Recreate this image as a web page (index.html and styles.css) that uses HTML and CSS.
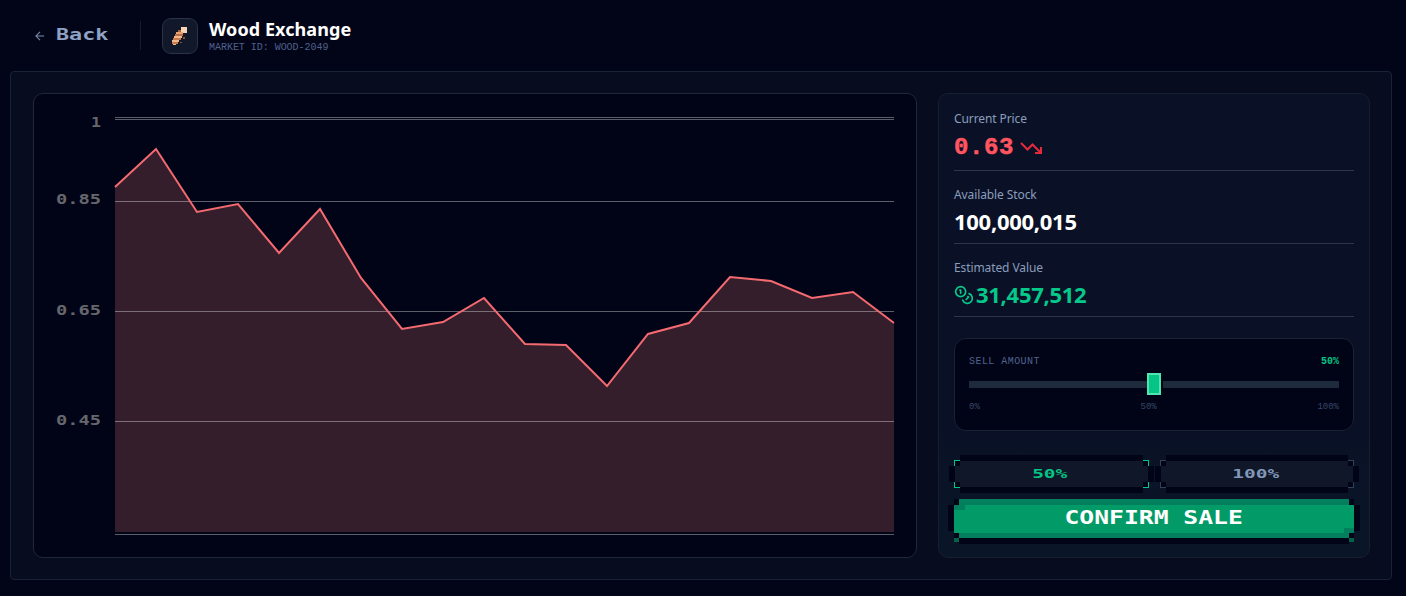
FILE: index.html
```html
<!DOCTYPE html>
<html lang="en">
<head>
<meta charset="utf-8">
<title>Wood Exchange</title>
<link rel="stylesheet" href="styles.css">
</head>
<body>
<header class="topbar">
  <a class="back">
    <svg class="back-icon" viewBox="0 0 24 24"><path d="M12 19l-7-7 7-7M19 12H5"/></svg>
    <span class="back-text pixel">Back</span>
  </a>
  <div class="vsep"></div>
  <div class="wood-tile">
    <svg viewBox="0 0 24 24" shape-rendering="crispEdges" class="wood-icon">
      <rect x="13" y="3" width="6" height="6" fill="#f4d2b4"/>
      <rect x="10" y="6" width="3" height="2" fill="#a8623c"/>
      <rect x="8" y="8" width="7" height="2" fill="#e8a074"/>
      <rect x="7" y="10" width="8" height="2" fill="#b86f45"/>
      <rect x="6" y="12" width="8" height="2" fill="#f2b68b"/>
      <rect x="5" y="14" width="8" height="2" fill="#c47a4e"/>
      <rect x="4" y="16" width="7" height="2" fill="#f2b68b"/>
      <rect x="4" y="18" width="6" height="2" fill="#c47a4e"/>
      <rect x="5" y="20" width="3" height="1" fill="#f2b68b"/>
      <rect x="15" y="13" width="2" height="2" fill="#8a5637"/>
      <rect x="12" y="18" width="2" height="1" fill="#8a5637"/>
    </svg>
  </div>
  <div class="title-block">
    <h1 class="title">Wood Exchange</h1>
    <div class="market-id">MARKET ID: WOOD-2049</div>
  </div>
</header>

<main class="panel">
  <section class="chart-card">
    <svg class="chart" viewBox="0 0 882 464">
      <polygon class="area" points="81,93 122,55 163,118 204,110 245,159 286,115 327,184 368,235 409,228 450,204 491,250 532,251 573,292 614,240 655,229 696,183 737,187 778,204 819,198 860,229 860,438 81,438"/>
      <g class="grid">
        <line x1="81" x2="860" y1="23.5" y2="23.5"/>
        <line x1="81" x2="860" y1="25.5" y2="25.5"/>
        <line x1="81" x2="860" y1="107.5" y2="107.5"/>
        <line x1="81" x2="860" y1="217.5" y2="217.5"/>
        <line x1="81" x2="860" y1="327.5" y2="327.5"/>
        <line x1="81" x2="860" y1="440.5" y2="440.5"/>
      </g>
      <polyline class="stroke" points="81,93 122,55 163,118 204,110 245,159 286,115 327,184 368,235 409,228 450,204 491,250 532,251 573,292 614,240 655,229 696,183 737,187 778,204 819,198 860,229"/>
      <g class="axis">
        <text x="67" y="33" textLength="10" lengthAdjust="spacingAndGlyphs">1</text>
        <text x="67" y="110" textLength="45" lengthAdjust="spacingAndGlyphs">0.85</text>
        <text x="67" y="221" textLength="45" lengthAdjust="spacingAndGlyphs">0.65</text>
        <text x="67" y="331" textLength="45" lengthAdjust="spacingAndGlyphs">0.45</text>
      </g>
    </svg>
  </section>

  <aside class="side-card">
    <div class="stat stat-price">
      <div class="stat-label">Current Price</div>
      <div class="stat-value price">0.63
        <svg class="trend" viewBox="0 0 24 24"><path d="M22 17l-8.5-8.5-5 5L2 7M16 17h6v-6"/></svg>
      </div>
    </div>
    <div class="stat">
      <div class="stat-label">Available Stock</div>
      <div class="stat-value stock">100,000,015</div>
    </div>
    <div class="stat">
      <div class="stat-label">Estimated Value</div>
      <div class="stat-value estimate">
        <svg class="coins" viewBox="0 0 24 24"><circle cx="8" cy="8" r="6"/><path d="M18.09 10.37A6 6 0 1 1 10.34 18M7 6h1v4M16.71 13.88l.7.71-2.82 2.82"/></svg>
        31,457,512
      </div>
    </div>

    <div class="slider-box">
      <div class="slider-head">
        <span class="slider-label">SELL AMOUNT</span>
        <span class="slider-pct">50%</span>
      </div>
      <div class="track"><span class="thumb"></span></div>
      <div class="ticks"><span>0%</span><span>50%</span><span>100%</span></div>
    </div>

    <div class="quick-row">
      <button class="quick quick-on"><span class="pixel">50%</span></button>
      <button class="quick quick-off"><span class="pixel">100%</span></button>
    </div>
    <button class="confirm"><span class="pixel">CONFIRM SALE</span></button>
  </aside>
</main>
</body>
</html>
```
FILE: styles.css
```css
* { box-sizing: border-box; margin: 0; padding: 0; }
html, body { height: 100%; }
body {
  background: #020518;
  font-family: "Noto Sans", sans-serif;
  color: #fff;
  overflow: hidden;
  padding: 0 14px 16px 10px;
  display: flex;
  flex-direction: column;
}
.pixel { font-family: "DejaVu Sans Mono", monospace; font-weight: 700; display: inline-block; }

.topbar {
  height: 71px;
  display: flex;
  align-items: center;
  padding-left: 23px;
  flex: none;
}
.back { display: flex; align-items: center; width: 107px; }
.back-icon { width: 14px; height: 14px; fill: none; stroke: #7c8fb0; stroke-width: 1.8; }
.back-text {
  margin: -2px 0 0 9px;
  font-size: 15px;
  line-height: 18px;
  color: #8ea2c6;
  transform: scaleX(1.45);
  transform-origin: left center;
}
.vsep { width: 1px; height: 29px; background: #151c30; margin-right: 21px; }
.wood-tile {
  width: 36px; height: 36px;
  background: #101829;
  border: 1px solid #2a3448;
  border-radius: 9px;
  display: flex; align-items: center; justify-content: center;
}
.wood-icon { width: 24px; height: 24px; }
.title-block { margin-left: 11px; margin-top: -1px; }
.title { font-size: 18px; line-height: 23px; font-weight: 700; color: #fff; letter-spacing: .07px; }
.market-id { font-family: "Liberation Mono", monospace; font-size: 10px; line-height: 11px; margin-top: 1px; color: #50608c; letter-spacing: -.03px; }

.panel {
  flex: 1;
  min-height: 0;
  display: flex;
  gap: 21px;
  padding: 21px 21px 21px 22px;
  background: #070c1e;
  border: 1px solid #1a2236;
  border-radius: 4px;
}
.chart-card {
  width: 884px;
  flex: none;
  background: #010416;
  border: 1px solid #1f2839;
  border-radius: 10px;
  overflow: hidden;
}
.chart { display: block; width: 882px; height: 464px; }
.area { fill: #351e2b; }
.grid line { stroke: #fff; stroke-opacity: .36; stroke-width: 1; }
.stroke { fill: none; stroke: #f56a70; stroke-width: 2; stroke-linejoin: miter; }
.axis text {
  font-family: "DejaVu Sans Mono", monospace;
  font-weight: 700;
  font-size: 14px;
  fill: #66676c;
  text-anchor: end;
}

.side-card {
  flex: 1;
  min-width: 0;
  display: flex;
  flex-direction: column;
  padding: 15px 15px 0;
  background: linear-gradient(#0a1126 72%, #0a1628);
  border: 1px solid #161e30;
  border-radius: 10px;
}
.stat { border-bottom: 1px solid #2b3648; height: 73px; }
.stat-price { height: 62px; }
.stat-label { font-size: 12px; line-height: 20px; color: #8b9dbb; letter-spacing: -.1px; }
.stat-value { font-size: 22px; line-height: 30px; font-weight: 700; display: flex; align-items: center; margin-top: 1px; letter-spacing: -.28px; }
.stat + .stat { padding-top: 14px; }
.price {
  margin-top: 4px;
  font-family: "Liberation Mono", monospace;
  font-size: 24px;
  color: #ff5560;
  letter-spacing: .6px;
  -webkit-text-stroke: .5px #ff5560;
  gap: 5px;
}
.trend { width: 24px; height: 24px; fill: none; stroke: #e62a3e; stroke-width: 2; }
.stock { color: #fff; }
.estimate { color: #04c98a; gap: 2px; }
.coins { width: 20px; height: 20px; margin-top: 2px; fill: none; stroke: #04c98a; stroke-width: 2; stroke-linecap: round; stroke-linejoin: round; }

.slider-box {
  margin-top: 21px;
  height: 93px;
  padding: 15px 14px 0;
  background: #010416;
  border: 1px solid #192233;
  border-radius: 12px;
  flex: none;
}
.slider-head { display: flex; justify-content: space-between; align-items: center; height: 14px; }
.slider-label { font-family: "Liberation Mono", monospace; font-size: 10px; letter-spacing: .45px; color: #51628f; }
.slider-pct { font-family: "Liberation Mono", monospace; font-size: 10px; font-weight: 700; color: #04c585; }
.track { position: relative; height: 7px; margin-top: 13px; background: #1e2b3c; }
.thumb {
  position: absolute;
  left: 178px; top: -8px;
  width: 14px; height: 22px;
  background: #04c585;
  border: 2px solid #52e3ae;
  box-shadow: 2px 0 0 0 #010416;
}
.ticks {
  display: flex;
  justify-content: space-between;
  margin-top: 13px;
  font-family: "Liberation Mono", monospace;
  font-size: 9px;
  line-height: 12px;
  color: #384667;
}

.quick-row { display: grid; grid-template-columns: 193px 192px; gap: 13px; margin-top: 30px; flex: none; padding: 0 1px; }
.quick {
  position: relative;
  height: 26px;
  border: 0;
  background: #0f1728;
  display: flex; align-items: center; justify-content: center;
}
/* pixel outline: dark bars and cut corners */
.quick::before {
  content: "";
  position: absolute;
  inset: -6px;
  background:
    linear-gradient(#010416 0 0) center top / calc(100% - 22px) 6px no-repeat,
    linear-gradient(#010416 0 0) center bottom / calc(100% - 22px) 6px no-repeat,
    linear-gradient(#010416 0 0) left 0 top 11px / 6px 16px no-repeat,
    linear-gradient(#010416 0 0) right 0 top 11px / 6px 16px no-repeat,
    linear-gradient(#010416 0 0) left 6px top 6px / 5px 5px no-repeat,
    linear-gradient(#010416 0 0) right 6px top 6px / 5px 5px no-repeat,
    linear-gradient(#010416 0 0) left 6px bottom 6px / 5px 5px no-repeat,
    linear-gradient(#010416 0 0) right 6px bottom 6px / 5px 5px no-repeat;
}
/* corner brackets */
.quick::after {
  content: "";
  position: absolute;
  inset: -1px;
  --c: #33405a;
  background:
    linear-gradient(var(--c) 0 0) left top / 6px 1px no-repeat,
    linear-gradient(var(--c) 0 0) left top / 1px 6px no-repeat,
    linear-gradient(var(--c) 0 0) right top / 6px 1px no-repeat,
    linear-gradient(var(--c) 0 0) right top / 1px 6px no-repeat,
    linear-gradient(var(--c) 0 0) left bottom / 6px 1px no-repeat,
    linear-gradient(var(--c) 0 0) left bottom / 1px 6px no-repeat,
    linear-gradient(var(--c) 0 0) right bottom / 6px 1px no-repeat,
    linear-gradient(var(--c) 0 0) right bottom / 1px 6px no-repeat;
}
.quick .pixel { position: relative; z-index: 1; font-size: 13px; line-height: 14px; transform: scaleX(1.5); margin-right: 3px; }
.quick-on::after { --c: #04c585; }
.quick-on .pixel { color: #04c585; }
.quick-off .pixel { color: #8296b9; }

.confirm {
  position: relative;
  margin-top: 12px;
  height: 39px;
  flex: none;
  border: 0;
  background: linear-gradient(#027f5c 0 6px, #029a66 6px 34px, #027f5c 34px);
  display: flex; align-items: center; justify-content: center;
}
.confirm::before {
  content: "";
  position: absolute;
  inset: 0 -6px -6px;
  background:
    linear-gradient(#010416 0 0) left 0 top 6px / 6px 26px no-repeat,
    linear-gradient(#010416 0 0) right 0 top 6px / 6px 26px no-repeat,
    linear-gradient(#010416 0 0) center bottom / calc(100% - 22px) 6px no-repeat,
    linear-gradient(#010416 0 0) left 6px top 0 / 5px 6px no-repeat,
    linear-gradient(#010416 0 0) right 6px top 0 / 5px 6px no-repeat,
    linear-gradient(#010416 0 0) left 6px top 34px / 5px 5px no-repeat,
    linear-gradient(#010416 0 0) right 6px top 34px / 5px 5px no-repeat,
    linear-gradient(#06614b 0 0) left 6px top 39px / 5px 4px no-repeat,
    linear-gradient(#06614b 0 0) right 6px top 39px / 5px 4px no-repeat,
    linear-gradient(#027f5c 0 0) left 6px top 6px / 11px 5px no-repeat,
    linear-gradient(#027f5c 0 0) right 6px top 29px / 10px 5px no-repeat;
}
.confirm .pixel { position: relative; z-index: 1; font-size: 19px; line-height: 22px; color: #fff; transform: scaleX(1.3); margin-top: -3px; }
```
